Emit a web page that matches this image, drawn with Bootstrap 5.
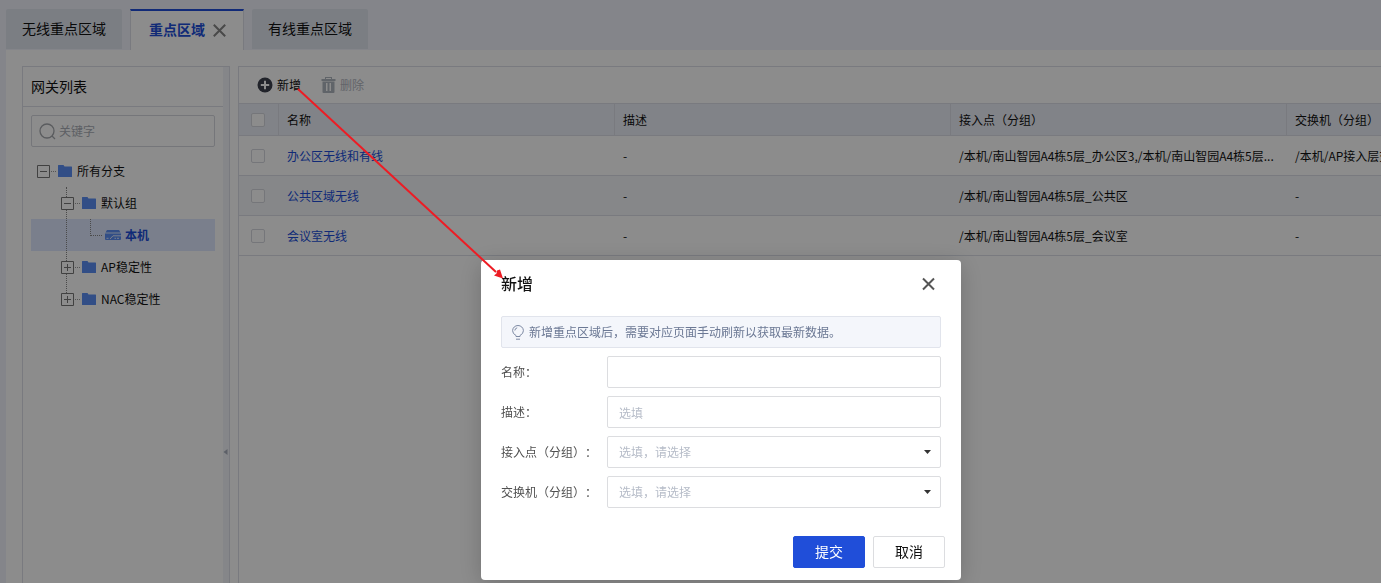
<!DOCTYPE html>
<html lang="zh-CN">
<head>
<meta charset="utf-8">
<meta name="viewport" content="width=device-width, initial-scale=1">
<title>重点区域</title>
<link href="https://cdn.jsdelivr.net/npm/bootstrap@5.3.0/dist/css/bootstrap.min.css" rel="stylesheet">
<style>
  :root { --line: #dcdfe8; --brand: #204ed9; }
  body { font-family: "Noto Sans CJK SC", sans-serif; font-size: 12px; line-height: 20px; color: #111; background: #f1f2fb; min-height: 100vh; overflow: hidden; text-spacing-trim: space-all; }
  button, input, select { font-family: inherit; }
  svg { display: block; flex: none; }
  a { text-decoration: none; }

  .page-tabs { padding: 9px 0 0 6px; gap: 8px; border: 0; height: 50px; flex-wrap: nowrap; }
  .page-tabs .nav-link { height: 40px; margin: 0; padding: 0 16px; border: 0; border-radius: 2px 2px 0 0; background: #e0e6ef; color: #111; font-size: 14px; line-height: 38px; }
  .page-tabs .nav-link.active { height: 41px; padding: 0 17px 0 18px; background: #fff; color: var(--brand); font-weight: 700; border: 1px solid var(--line); border-top: 2px solid var(--brand); border-bottom: 0; border-radius: 0; gap: 8px; }
  .active .tab-name { color: inherit; line-height: 36px; align-self: flex-start; }
  .tab-close { border: 0; background: none; padding: 0; }

  .workspace { margin-left: 6px; padding: 16px 0 0 16px; gap: 8px; background: #fff; min-height: 0; }
  .side { width: 208px; flex: none; border: 1px solid var(--line); border-bottom: 0; }
  .side-main { min-width: 0; }
  .side-title { height: 40px; padding: 0 8px; font-size: 14px; line-height: 38px; border-bottom: 1px solid var(--line); margin: 0; font-weight: 400; }
  .splitter { width: 6px; flex: none; background: #f3f5f9; }
  .splitter button { border: 0; padding: 0; background: none; margin-top: 254px; }
  .search { margin: 8px 8px 8px; height: 32px; border: 1px solid #d5d8de; border-radius: 2px; padding: 0 7px; gap: 3px; }
  .search input { border: 0; padding: 0; font-size: 12px; line-height: 20px; min-height: 0; background: none; }
  .search input::placeholder { color: #aaaeb6; }

  .tree, .tree ul { list-style: none; margin: 0; padding: 0; }
  .tree { margin: 0 8px; }
  .tree-node { height: 32px; padding-left: 6px; position: relative; }
  .lvl-2 { padding-left: 30px; }
  .lvl-3 { padding-left: 59px; }
  .tree-node a { color: #111; margin-left: 5px; }
  .tree-node.picked { background: #dfe8ff; }
  .tree-node.picked a { color: var(--brand); font-weight: 700; margin-left: 4px; }
  .toggle { width: 13px; height: 13px; border: 0; padding: 0; background: #fff; position: relative; z-index: 1; }
  .dots { width: 5px; margin: 0 2px 0 1px; border-top: 1px dotted #999; }
  .branch { position: relative; }
  .branch::before { content: ""; position: absolute; z-index: 1; left: 35px; top: 0; bottom: 16px; border-left: 1px dotted #888; }
  .elbow { width: 12px; height: 17px; margin-right: 3px; align-self: flex-start; border-left: 1px dotted #888; border-bottom: 1px dotted #888; }

  .grid-panel { border: 1px solid var(--line); border-width: 1px 0 0 1px; min-width: 0; overflow: hidden; }
  .tools { height: 36px; padding-left: 18px; gap: 20px; }
  .tools .btn { --bs-btn-padding-x: 0; --bs-btn-padding-y: 0; --bs-btn-font-size: 12px; border: 0; gap: 4px; color: #111; line-height: 20px; }
  .tools .btn:disabled { color: #b3b7c1; opacity: 1; }
  .data-grid { width: 1384px; table-layout: fixed; margin: 0; font-size: 12px; color: #111; border-collapse: separate; border-spacing: 0; }
  .data-grid > :not(caption) > * > * { padding: 0 8px; border-bottom: 1px solid var(--line); height: 40px; vertical-align: middle; white-space: nowrap; overflow: hidden; text-overflow: ellipsis; color: inherit; }
  .data-grid > thead > tr > th { height: 33px; font-weight: 400; background: #eceef7; border-top: 1px solid var(--line); border-right: 1px solid var(--line); }
  .data-grid > tbody > tr:nth-child(even) > td { background: #f4f6fa; }
  .data-grid > tbody a { color: var(--brand); }
  .data-grid > :not(caption) > * > .pick { padding: 0 0 0 12px; }
  .data-grid .form-check-input { width: 14px; height: 14px; margin: 0; display: block; border: 1px solid #d5d8de; border-radius: 2px; }
  .w-pick { width: 40px; }
  .w-data { width: 336px; }

  .modal-backdrop { --bs-backdrop-opacity: .45; }
  .modal { padding-left: 61px; overflow: hidden; }
  .add-dialog { max-width: 480px; margin: 260px auto 0; }
  .add-dialog .modal-content { border: 0; border-radius: 4px; box-shadow: 0 4px 24px rgba(0,0,0,.2); }
  .add-dialog .modal-header { height: 48px; padding: 0 25px 0 20px; border: 0; }
  .add-dialog .modal-title { font-size: 16px; line-height: 24px; padding-bottom: 2px; font-weight: 500; color: #111; }
  .add-dialog .modal-body { padding: 8px 20px 28px; gap: 8px; display: grid; }
  .add-dialog .modal-footer { padding: 0 16px 12px; gap: 8px; border: 0; }
  .add-dialog .modal-footer > * { margin: 0; }
  .tip-bar { height: 32px; margin: 0; padding: 0 10px; gap: 5px; border: 1px solid #e1e4ec; border-radius: 2px; background: #f4f6fb; color: #6b7894; }
  .field label { width: 106px; flex: none; color: #505050; }
  .field .form-control, .field .form-select { height: 32px; padding: 0 11px; font-size: 12px; line-height: 20px; border: 1px solid #dcdde0; border-radius: 2px; color: #222; }
  .field .form-control::placeholder { color: #b6bcc8; }
  .field .form-select { color: #b6bcc8; padding-right: 28px;
    background-image: url("data:image/svg+xml,%3Csvg xmlns='http://www.w3.org/2000/svg' viewBox='0 0 7 4'%3E%3Cpath d='M0 0h7L3.5 4z' fill='%23333'/%3E%3C/svg%3E"); background-size: 7px 4px; background-position: right 9px center; }
  .act { width: 72px; height: 32px; padding: 0 0 2px; font-size: 14px; line-height: 20px; border-radius: 2px; }
  .act-main { background: var(--brand); border-color: var(--brand); color: #fff; }
  .act-plain { background: #fff; border: 1px solid #dcdde0; color: #111; }
  .icon-btn { border: 0; background: none; padding: 0; }
  .guide { position: absolute; left: 290px; top: 80px; z-index: 2000; pointer-events: none; }
</style>
</head>
<body>
<div class="d-flex flex-column vh-100">
  <nav class="nav nav-tabs page-tabs" aria-label="页签">
    <a class="nav-link" href="#">无线重点区域</a>
    <div class="nav-link active d-flex align-items-center">
      <a class="tab-name" href="#">重点区域</a>
      <button class="tab-close" type="button" aria-label="关闭页签"><svg width="13" height="13" viewBox="0 0 13 13" stroke="#858585" stroke-width="2"><path d="M.8.8l11.4 11.4M12.2.8L.8 12.2"/></svg></button>
    </div>
    <a class="nav-link" href="#">有线重点区域</a>
  </nav>

  <main class="workspace d-flex flex-grow-1">
    <aside class="side d-flex">
      <div class="side-main flex-grow-1">
        <h2 class="side-title">网关列表</h2>
        <div class="search d-flex align-items-center">
          <svg width="17" height="17" viewBox="0 0 17 17" fill="none" stroke="#a5a8ad" stroke-width="1.3"><circle cx="8" cy="8" r="7"/><path d="M13 13l3 3"/></svg>
          <input class="form-control shadow-none" type="text" placeholder="关键字" aria-label="关键字">
        </div>
        <ul class="tree">
          <li>
            <div class="tree-node d-flex align-items-center">
              <button class="toggle" type="button" aria-label="收起"><svg width="13" height="13" fill="none" stroke="#777"><path d="M.5.5h12v12H.5zM3 6.5h7"/></svg></button><span class="dots"></span>
              <svg width="14" height="12" viewBox="0 0 14 12" fill="#5b8ff5"><path d="M0 .5Q0 0 .5 0h5l1 1.500H13.500q.5 0 .5.5v9.500q0 .5-.5.5H.5q-.5 0-.5-.5z"/></svg><a href="#">所有分支</a>
            </div>
            <ul class="branch">
              <li>
                <div class="tree-node lvl-2 d-flex align-items-center">
                  <button class="toggle" type="button" aria-label="收起"><svg width="13" height="13" fill="none" stroke="#777"><path d="M.5.5h12v12H.5zM3 6.5h7"/></svg></button><span class="dots"></span>
                  <svg width="14" height="12" viewBox="0 0 14 12" fill="#5b8ff5"><path d="M0 .5Q0 0 .5 0h5l1 1.500H13.500q.5 0 .5.5v9.500q0 .5-.5.5H.5q-.5 0-.5-.5z"/></svg><a href="#">默认组</a>
                </div>
                <ul>
                  <li class="tree-node lvl-3 picked d-flex align-items-center">
                    <span class="elbow"></span>
                    <svg width="16" height="10" viewBox="0 0 16 10"><path d="M2 0h12l1.500 2.500H.5z" fill="#5b8ff5"/><path d="M0 3.500h16V9q0 1-1 1H1q-1 0-1-1z" fill="#5b8ff5"/><path d="M1.500 8.300h2M5 9l3-3.200h8M9.500 8.300h1.500M12 8.300h2" fill="none" stroke="#dfe8ff"/></svg><a href="#">本机</a>
                  </li>
                </ul>
              </li>
              <li class="tree-node lvl-2 d-flex align-items-center">
                <button class="toggle" type="button" aria-label="展开"><svg width="13" height="13" fill="none" stroke="#777"><path d="M.5.5h12v12H.5zM3 6.5h7M6.500 3v7"/></svg></button><span class="dots"></span>
                <svg width="14" height="12" viewBox="0 0 14 12" fill="#5b8ff5"><path d="M0 .5Q0 0 .5 0h5l1 1.500H13.500q.5 0 .5.5v9.500q0 .5-.5.5H.5q-.5 0-.5-.5z"/></svg><a href="#">AP稳定性</a>
              </li>
              <li class="tree-node lvl-2 d-flex align-items-center">
                <button class="toggle" type="button" aria-label="展开"><svg width="13" height="13" fill="none" stroke="#777"><path d="M.5.5h12v12H.5zM3 6.5h7M6.500 3v7"/></svg></button><span class="dots"></span>
                <svg width="14" height="12" viewBox="0 0 14 12" fill="#5b8ff5"><path d="M0 .5Q0 0 .5 0h5l1 1.500H13.500q.5 0 .5.5v9.500q0 .5-.5.5H.5q-.5 0-.5-.5z"/></svg><a href="#">NAC稳定性</a>
              </li>
            </ul>
          </li>
        </ul>
      </div>
      <div class="splitter d-flex align-items-center">
        <button type="button" aria-label="折叠侧栏"><svg width="5" height="6" viewBox="0 0 5 6" fill="#a9b0bd"><path d="M4.500 0v6L.5 3z"/></svg></button>
      </div>
    </aside>

    <section class="grid-panel flex-grow-1">
      <div class="tools d-flex align-items-center">
        <button class="btn d-flex align-items-center" type="button"><svg width="16" height="16" viewBox="0 0 16 16"><circle cx="8" cy="8" r="7.500" fill="#3c404d"/><path d="M8 3.800v8.400M3.800 8h8.400" stroke="#fff" stroke-width="2"/></svg>新增</button>
        <button class="btn d-flex align-items-center" type="button" disabled><svg width="15" height="16" viewBox="0 0 15 16" fill="#b0b6c0"><path d="M4 0h7v2h3.500v2H.5V2H4zm1 1v1h5V1z" fill-rule="evenodd"/><path d="M1.500 4.500h12V15q0 1-1 1h-10q-1 0-1-1zM5 6v8h1.500V6zm3.500 0v8H10V6z" fill-rule="evenodd"/></svg>删除</button>
      </div>
      <table class="table data-grid">
        <colgroup><col class="w-pick"><col class="w-data"><col class="w-data"><col class="w-data"><col class="w-data"></colgroup>
        <thead>
          <tr><th class="pick"><input class="form-check-input" type="checkbox" aria-label="全选"></th><th>名称</th><th>描述</th><th>接入点（分组）</th><th>交换机（分组）</th></tr>
        </thead>
        <tbody>
          <tr><td class="pick"><input class="form-check-input" type="checkbox" aria-label="选择办公区无线和有线"></td><td><a href="#">办公区无线和有线</a></td><td>-</td><td>/本机/南山智园A4栋5层_办公区3,/本机/南山智园A4栋5层...</td><td>/本机/AP接入层交换机</td></tr>
          <tr><td class="pick"><input class="form-check-input" type="checkbox" aria-label="选择公共区域无线"></td><td><a href="#">公共区域无线</a></td><td>-</td><td>/本机/南山智园A4栋5层_公共区</td><td>-</td></tr>
          <tr><td class="pick"><input class="form-check-input" type="checkbox" aria-label="选择会议室无线"></td><td><a href="#">会议室无线</a></td><td>-</td><td>/本机/南山智园A4栋5层_会议室</td><td>-</td></tr>
        </tbody>
      </table>
    </section>
  </main>
</div>

<div class="modal-backdrop show"></div>
<div class="modal d-block" role="dialog" aria-modal="true" aria-labelledby="dlgTitle">
  <div class="modal-dialog add-dialog">
    <form class="modal-content">
      <div class="modal-header">
        <h1 class="modal-title" id="dlgTitle">新增</h1>
        <button class="icon-btn" type="button" aria-label="关闭"><svg width="15" height="14" viewBox="0 0 15 14" stroke="#555" stroke-width="2"><path d="M2 1.500l11 11M13 1.500l-11 11"/></svg></button>
      </div>
      <div class="modal-body">
        <div class="tip-bar d-flex align-items-center">
          <svg width="12" height="15" viewBox="0 0 12 15" fill="none" stroke="#7d89a3"><path d="M4 11.500V10.500Q.6 8.800.6 5.700a5.400 5.200 0 0 1 10.800 0Q11.400 8.800 8 10.500v1zM4 14.200h4M2.800 5.500q.2-2.200 2.400-2.700"/></svg>
          <span>新增重点区域后，需要对应页面手动刷新以获取最新数据。</span>
        </div>
        <div class="field d-flex align-items-center"><label for="fName">名称：</label><input id="fName" class="form-control" type="text"></div>
        <div class="field d-flex align-items-center"><label for="fDesc">描述：</label><input id="fDesc" class="form-control" type="text" placeholder="选填"></div>
        <div class="field d-flex align-items-center"><label for="fAp">接入点（分组）：</label><select id="fAp" class="form-select"><option>选填，请选择</option></select></div>
        <div class="field d-flex align-items-center"><label for="fSw">交换机（分组）：</label><select id="fSw" class="form-select"><option>选填，请选择</option></select></div>
      </div>
      <div class="modal-footer">
        <button class="btn act act-main" type="submit">提交</button>
        <button class="btn act act-plain" type="button">取消</button>
      </div>
    </form>
  </div>
</div>

<svg class="guide" width="220" height="205" viewBox="0 0 220 205" aria-hidden="true"><path d="M8 9l198 183" stroke="#ed1c24" stroke-width="2"/><path d="M213 198.500l-9-3 2.500-2 .5-3 3-1z" fill="#ed1c24"/></svg>
<script src="https://cdn.jsdelivr.net/npm/bootstrap@5.3.0/dist/js/bootstrap.bundle.min.js"></script>
</body>
</html>
